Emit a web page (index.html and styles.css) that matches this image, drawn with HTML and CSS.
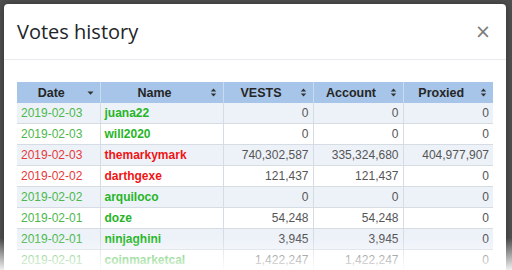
FILE: index.html
```html
<!DOCTYPE html>
<html>
<head>
<meta charset="utf-8">
<link rel="stylesheet" href="styles.css">
</head>
<body>
<div class="backdrop">
  <div class="modal">
    <div class="modal-header">
      <h5 class="modal-title">Votes history</h5>
      <span class="close">×</span>
    </div>
    <div class="modal-body">
      <table class="votes">
        <colgroup>
          <col class="c-date"><col class="c-name"><col class="c-num"><col class="c-num"><col class="c-num">
        </colgroup>
        <thead>
          <tr>
            <th><span class="th-label">Date</span><svg class="sort" width="7" height="9" viewBox="0 0 7 9"><path d="M0.5 3.5h6l-3 3.2z" fill="#333"/></svg></th>
            <th><span class="th-label">Name</span><svg class="sort" width="7" height="9" viewBox="0 0 7 9"><path d="M0.8 3.6h5.4l-2.7-3.2z M0.8 5.4h5.4l-2.7 3.2z" fill="#333"/></svg></th>
            <th><span class="th-label">VESTS</span><svg class="sort" width="7" height="9" viewBox="0 0 7 9"><path d="M0.8 3.6h5.4l-2.7-3.2z M0.8 5.4h5.4l-2.7 3.2z" fill="#333"/></svg></th>
            <th><span class="th-label">Account</span><svg class="sort" width="7" height="9" viewBox="0 0 7 9"><path d="M0.8 3.6h5.4l-2.7-3.2z M0.8 5.4h5.4l-2.7 3.2z" fill="#333"/></svg></th>
            <th><span class="th-label">Proxied</span><svg class="sort" width="7" height="9" viewBox="0 0 7 9"><path d="M0.8 3.6h5.4l-2.7-3.2z M0.8 5.4h5.4l-2.7 3.2z" fill="#333"/></svg></th>
          </tr>
        </thead>
        <tbody>
          <tr class="up"><td class="date">2019-02-03</td><td class="name">juana22</td><td class="num">0</td><td class="num">0</td><td class="num">0</td></tr>
          <tr class="up"><td class="date">2019-02-03</td><td class="name">will2020</td><td class="num">0</td><td class="num">0</td><td class="num">0</td></tr>
          <tr class="down"><td class="date">2019-02-03</td><td class="name">themarkymark</td><td class="num">740,302,587</td><td class="num">335,324,680</td><td class="num">404,977,907</td></tr>
          <tr class="down"><td class="date">2019-02-02</td><td class="name">darthgexe</td><td class="num">121,437</td><td class="num">121,437</td><td class="num">0</td></tr>
          <tr class="up"><td class="date">2019-02-02</td><td class="name">arquiloco</td><td class="num">0</td><td class="num">0</td><td class="num">0</td></tr>
          <tr class="up"><td class="date">2019-02-01</td><td class="name">doze</td><td class="num">54,248</td><td class="num">54,248</td><td class="num">0</td></tr>
          <tr class="up"><td class="date">2019-02-01</td><td class="name">ninjaghini</td><td class="num">3,945</td><td class="num">3,945</td><td class="num">0</td></tr>
          <tr class="up"><td class="date">2019-02-01</td><td class="name">coinmarketcal</td><td class="num">1,422,247</td><td class="num">1,422,247</td><td class="num">0</td></tr>
        </tbody>
      </table>
    </div>
  </div>
  <div class="fade"></div>
</div>
</body>
</html>
```
FILE: styles.css
```css
html, body {
  margin: 0;
  padding: 0;
  height: 100%;
  overflow: hidden;
}
.backdrop {
  position: relative;
  height: 270px;
  background: #4f4f4f;
  padding: 4px 6px 0 4px;
  box-sizing: border-box;
}
.modal {
  width: 502px;
  background: #fff;
  border-radius: 4px 4px 0 0;
  box-shadow: 0 0 6px rgba(0,0,0,0.4);
}
.modal-header {
  display: flex;
  align-items: center;
  justify-content: space-between;
  padding: 13px 14px 13px 13px;
  border-bottom: 1px solid #e9ecef;
}
.modal-title {
  margin: 0;
  font-family: "Open Sans", "Noto Sans", sans-serif;
  font-weight: 400;
  font-size: 20px;
  line-height: 29px;
  color: #212529;
}
.close {
  font-family: "DejaVu Sans", sans-serif;
  font-size: 19px;
  font-weight: 400;
  line-height: 1;
  color: #7a7a7a;
  margin-right: 1px;
}
.modal-body {
  padding: 22px 13px 10px 13px;
}
.votes {
  width: 476px;
  border-collapse: collapse;
  table-layout: fixed;
  font-family: "Liberation Sans", Arial, sans-serif;
  font-size: 12px;
}
.c-date { width: 83px; }
.c-name { width: 123px; }
.c-num { width: 90px; }
.votes th {
  height: 21px;
  padding: 0 6px 0 4px;
  background: #a7c5e8;
  color: #262626;
  font-size: 12.5px;
  font-weight: 700;
  border-left: 1px solid #c9dbef;
  position: relative;
  text-align: center;
  box-sizing: border-box;
}
.votes th:first-child { border-left: none; }
.th-label {
  display: inline-block;
  margin-right: 12px;
}
.votes th .sort {
  position: absolute;
  right: 6px;
  top: 6px;
}
.votes td {
  height: 20px;
  padding: 0 4px;
  border-bottom: 1px solid #d6dce4;
  border-left: 1px solid #d6dce4;
  white-space: nowrap;
}
.votes td:first-child { border-left: none; }
.votes tbody tr:nth-child(odd) td { background: #edf2f9; }
.votes tbody tr:nth-child(even) td { background: #fff; }
.votes td.num {
  text-align: right;
  color: #555;
}
.votes .name { font-weight: 700; }
.up .date { color: #4cb84c; }
.up .name { color: #26b526; }
.down .date { color: #e53a3a; }
.down .name { color: #f01414; }
.fade {
  position: absolute;
  left: 0;
  right: 0;
  bottom: 0;
  height: 32px;
  background: linear-gradient(to bottom, rgba(255,255,255,0), rgba(255,255,255,0.92));
}
```
